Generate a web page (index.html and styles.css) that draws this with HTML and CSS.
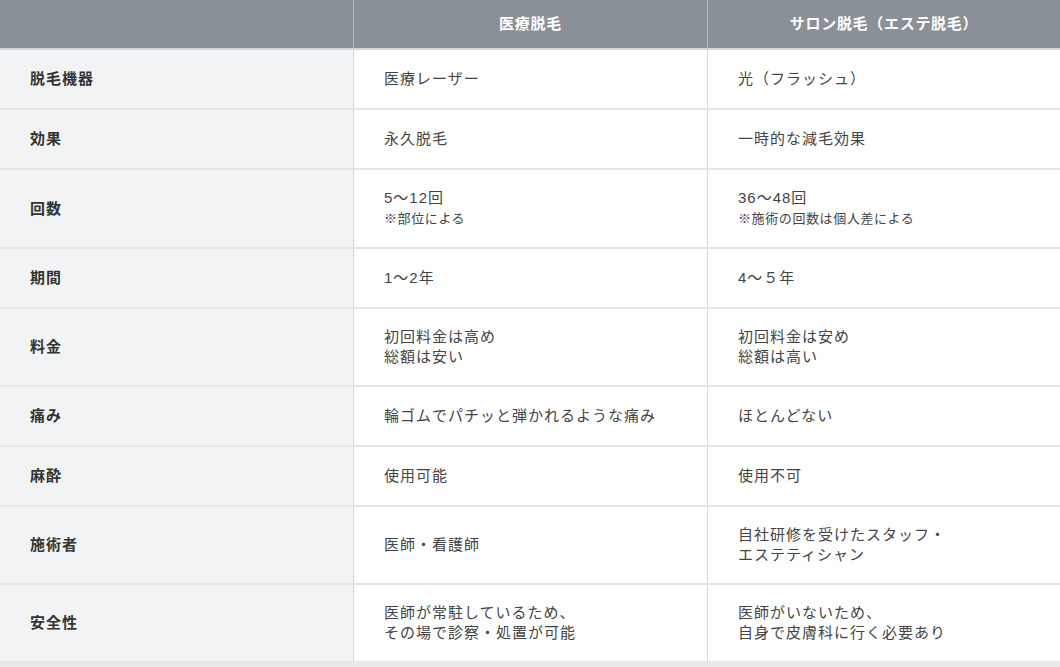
FILE: index.html
```html
<!DOCTYPE html>
<html lang="ja">
<head>
<meta charset="utf-8">
<title>医療脱毛とサロン脱毛の比較</title>
<link rel="stylesheet" href="styles.css">
</head>
<body>
<div class="compare">
  <div class="row head">
    <div class="cell"></div>
    <div class="cell">医療脱毛</div>
    <div class="cell">サロン脱毛（エステ脱毛）</div>
  </div>
  <div class="row">
    <div class="cell label">脱毛機器</div>
    <div class="cell">医療レーザー</div>
    <div class="cell">光（フラッシュ）</div>
  </div>
  <div class="row">
    <div class="cell label">効果</div>
    <div class="cell">永久脱毛</div>
    <div class="cell">一時的な減毛効果</div>
  </div>
  <div class="row">
    <div class="cell label">回数</div>
    <div class="cell"><div>5〜12回<span class="note">※部位による</span></div></div>
    <div class="cell"><div>36〜48回<span class="note">※施術の回数は個人差による</span></div></div>
  </div>
  <div class="row">
    <div class="cell label">期間</div>
    <div class="cell">1〜2年</div>
    <div class="cell">4〜５年</div>
  </div>
  <div class="row">
    <div class="cell label">料金</div>
    <div class="cell"><div>初回料金は高め<br>総額は安い</div></div>
    <div class="cell"><div>初回料金は安め<br>総額は高い</div></div>
  </div>
  <div class="row">
    <div class="cell label">痛み</div>
    <div class="cell">輪ゴムでパチッと弾かれるような痛み</div>
    <div class="cell">ほとんどない</div>
  </div>
  <div class="row">
    <div class="cell label">麻酔</div>
    <div class="cell">使用可能</div>
    <div class="cell">使用不可</div>
  </div>
  <div class="row">
    <div class="cell label">施術者</div>
    <div class="cell">医師・看護師</div>
    <div class="cell"><div>自社研修を受けたスタッフ・<br>エステティシャン</div></div>
  </div>
  <div class="row">
    <div class="cell label">安全性</div>
    <div class="cell"><div>医師が常駐しているため、<br>その場で診察・処置が可能</div></div>
    <div class="cell"><div>医師がいないため、<br>自身で皮膚科に行く必要あり</div></div>
  </div>
</div>
</body>
</html>
```

FILE: styles.css
```css
html, body {
  margin: 0;
  padding: 0;
}
body {
  background: #e8e9eb;
  font-family: "Liberation Sans", "Noto Sans CJK JP", sans-serif;
  color: #444;
}
.compare {
  width: 1060px;
  background: #fff;
}
.row {
  display: grid;
  grid-template-columns: 353px 354px 353px;
  border-bottom: 2px solid #e4e6e8;
}
.cell {
  box-sizing: border-box;
  min-height: 58px;
  padding: 18px 30px;
  display: flex;
  align-items: center;
  font-size: 15px;
  line-height: 20px;
  letter-spacing: 1px;
  border-left: 1px solid #d6d7d9;
}
.cell:first-child {
  border-left: none;
}
.label {
  background: #f2f3f5;
  color: #333;
  font-weight: bold;
}
.note {
  display: block;
  font-size: 13px;
  letter-spacing: 0.6px;
  line-height: 21px;
}
.head {
  background: #8a9097;
  border-bottom: 2px solid #d3d6d9;
}
.head .cell {
  min-height: 48px;
  padding: 0 20px;
  justify-content: center;
  color: #fff;
  font-weight: bold;
  letter-spacing: 0.7px;
  border-left-color: #b5babf;
}
```
